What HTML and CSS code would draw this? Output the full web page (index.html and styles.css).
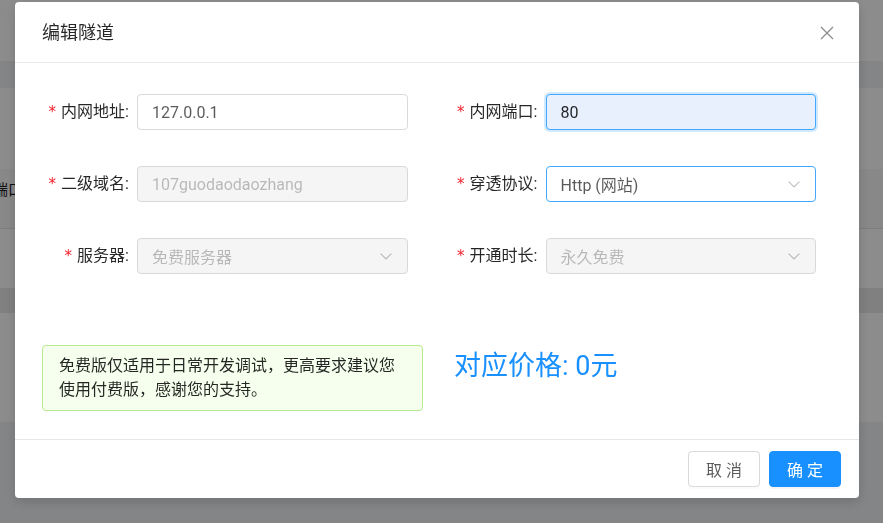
FILE: index.html
```html
<!DOCTYPE html>
<html lang="zh-CN">
<head>
<meta charset="utf-8">
<title>编辑隧道</title>
<link rel="stylesheet" href="styles.css">
</head>
<body>
<div class="page">
  <div class="band band-white band-h61"></div>
  <div class="band band-grey band-h27"></div>
  <div class="band band-white band-h81"></div>
  <div class="band band-head"><span class="th-text">内网端口</span></div>
  <div class="band band-white band-h59"></div>
  <div class="band band-hover"></div>
  <div class="band band-white band-h109"></div>
  <div class="band band-grey band-rest"></div>
</div>
<div class="mask"></div>
<div class="modal-wrap">
  <div class="modal">
    <div class="modal-header">
      <div class="modal-title">编辑隧道</div>
      <button class="modal-close" aria-label="关闭">
        <svg width="14" height="14" viewBox="0 0 14 14"><path d="M1 1L13 13M13 1L1 13" stroke="currentColor" stroke-width="1.3" fill="none"/></svg>
      </button>
    </div>
    <div class="modal-body">
      <div class="form-grid">
        <div class="form-item">
          <label class="form-label"><span class="req">*</span>内网地址:</label>
          <div class="input">127.0.0.1</div>
        </div>
        <div class="form-item">
          <label class="form-label"><span class="req">*</span>内网端口:</label>
          <div class="input input-autofill">80</div>
        </div>
        <div class="form-item">
          <label class="form-label"><span class="req">*</span>二级域名:</label>
          <div class="input input-disabled">107guodaodaozhang</div>
        </div>
        <div class="form-item">
          <label class="form-label"><span class="req">*</span>穿透协议:</label>
          <div class="input select select-active"><span>Http (网站)</span>
            <svg class="arrow" width="12" height="7" viewBox="0 0 12 7"><path d="M0.6 0.6L6 6L11.4 0.6" stroke="currentColor" stroke-width="1.1" fill="none"/></svg>
          </div>
        </div>
        <div class="form-item">
          <label class="form-label"><span class="req">*</span>服务器:</label>
          <div class="input select input-disabled"><span>免费服务器</span>
            <svg class="arrow" width="12" height="7" viewBox="0 0 12 7"><path d="M0.6 0.6L6 6L11.4 0.6" stroke="currentColor" stroke-width="1.1" fill="none"/></svg>
          </div>
        </div>
        <div class="form-item">
          <label class="form-label"><span class="req">*</span>开通时长:</label>
          <div class="input select input-disabled"><span>永久免费</span>
            <svg class="arrow" width="12" height="7" viewBox="0 0 12 7"><path d="M0.6 0.6L6 6L11.4 0.6" stroke="currentColor" stroke-width="1.1" fill="none"/></svg>
          </div>
        </div>
      </div>
      <div class="bottom-row">
        <div class="alert">免费版仅适用于日常开发调试，更高要求建议您使用付费版，感谢您的支持。</div>
        <div class="price">对应价格: 0元</div>
      </div>
    </div>
    <div class="modal-footer">
      <button class="btn">取 消</button>
      <button class="btn btn-primary">确 定</button>
    </div>
  </div>
</div>
</body>
</html>
```

FILE: styles.css
```css
* { box-sizing: border-box; }
html, body { margin: 0; padding: 0; }
body {
  width: 883px;
  height: 523px;
  overflow: hidden;
  font-family: Roboto, "Noto Sans CJK SC", sans-serif;
  color: rgba(0,0,0,0.85);
}

/* underlying page */
.page { display: flex; flex-direction: column; height: 523px; }
.band { flex: none; }
.band-white { background: #ffffff; }
.band-grey { background: #f0f2f5; }
.band-h61 { height: 61px; }
.band-h27 { height: 27px; }
.band-h81 { height: 81px; }
.band-h59 { height: 59px; }
.band-h109 { height: 109px; }
.band-head {
  height: 60px;
  background: #f7f7f7;
  border-bottom: 1px solid #e4e4e4;
  display: flex;
  align-items: center;
  padding-bottom: 20px;
}
.th-text {
  font-size: 15px;
  margin-left: -37px;
  color: rgba(0,0,0,0.9);
}
.band-hover { height: 25px; background: #e9e9e9; }
.band-rest { flex: 1; }

.mask {
  position: fixed;
  inset: 0;
  background: rgba(0,0,0,0.45);
}

/* modal */
.modal-wrap {
  position: fixed;
  inset: 0;
  padding: 2px 0 0 15px;
}
.modal {
  width: 844px;
  background: #fff;
  border-radius: 4px;
  box-shadow: 0 4px 12px rgba(0,0,0,0.15);
  display: flex;
  flex-direction: column;
}
.modal-header {
  height: 61px;
  border-bottom: 1px solid #e8e8e8;
  display: flex;
  align-items: center;
  justify-content: space-between;
  padding: 0 25px 0 27px;
}
.modal-title {
  font-size: 18px;
  line-height: 24px;
  color: rgba(0,0,0,0.85);
  margin-top: 2px;
}
.modal-close {
  border: 0;
  background: none;
  padding: 0;
  width: 14px;
  height: 14px;
  color: rgba(0,0,0,0.45);
  display: flex;
  margin-top: 2px;
}

.modal-body {
  padding: 31px 43px 28px 27px;
}
.form-grid {
  display: grid;
  grid-template-columns: 1fr 1fr;
  column-gap: 43px;
  row-gap: 36px;
}
.form-item {
  display: flex;
  align-items: center;
  height: 36px;
}
.form-label {
  width: 95px;
  flex: none;
  display: flex;
  justify-content: flex-end;
  align-items: center;
  padding-right: 8px;
  font-size: 16px;
  line-height: 24px;
  color: rgba(0,0,0,0.85);
  white-space: nowrap;
}
.req {
  color: #f5222d;
  font-family: "DejaVu Sans", sans-serif;
  font-size: 15px;
  margin-right: 5px;
  line-height: 1;
}
.input {
  flex: 1;
  min-width: 0;
  height: 36px;
  border: 1px solid #d9d9d9;
  border-radius: 4px;
  padding: 0 14px;
  display: flex;
  align-items: center;
  font-size: 16px;
  color: rgba(0,0,0,0.65);
  background: #fff;
  white-space: nowrap;
}
.input-autofill {
  background: #e8f0fe;
  border-color: #40a9ff;
  box-shadow: 0 0 0 2px rgba(24,144,255,0.2);
  color: rgba(0,0,0,0.85);
}
.input-disabled {
  background: #f5f5f5;
  color: rgba(0,0,0,0.25);
}
.select {
  justify-content: space-between;
  padding-right: 15px;
}
.select-active {
  border-color: #40a9ff;
}
.arrow {
  color: rgba(0,0,0,0.25);
  flex: none;
}

.bottom-row {
  display: flex;
  align-items: flex-start;
  margin-top: 71px;
}
.alert {
  width: 381px;
  flex: none;
  background: #f6ffed;
  border: 1px solid #b7eb8f;
  border-radius: 4px;
  padding: 8px 16px;
  font-size: 16px;
  line-height: 24px;
  color: rgba(0,0,0,0.85);
}
.price {
  margin-left: 31px;
  margin-top: 1px;
  font-size: 27px;
  line-height: 40px;
  color: #1890ff;
  white-space: nowrap;
}

.modal-footer {
  border-top: 1px solid #e8e8e8;
  padding: 11px 18px 11px;
  display: flex;
  justify-content: flex-end;
  gap: 9px;
}
.btn {
  width: 72px;
  height: 36px;
  border: 1px solid #d9d9d9;
  border-radius: 4px;
  background: #fff;
  color: rgba(0,0,0,0.65);
  font-family: Roboto, "Noto Sans CJK SC", sans-serif;
  font-size: 16px;
  padding: 0;
  box-shadow: 0 2px 0 rgba(0,0,0,0.015);
}
.btn-primary {
  background: #1890ff;
  border-color: #1890ff;
  color: #fff;
  box-shadow: 0 2px 0 rgba(0,0,0,0.045);
}
```
